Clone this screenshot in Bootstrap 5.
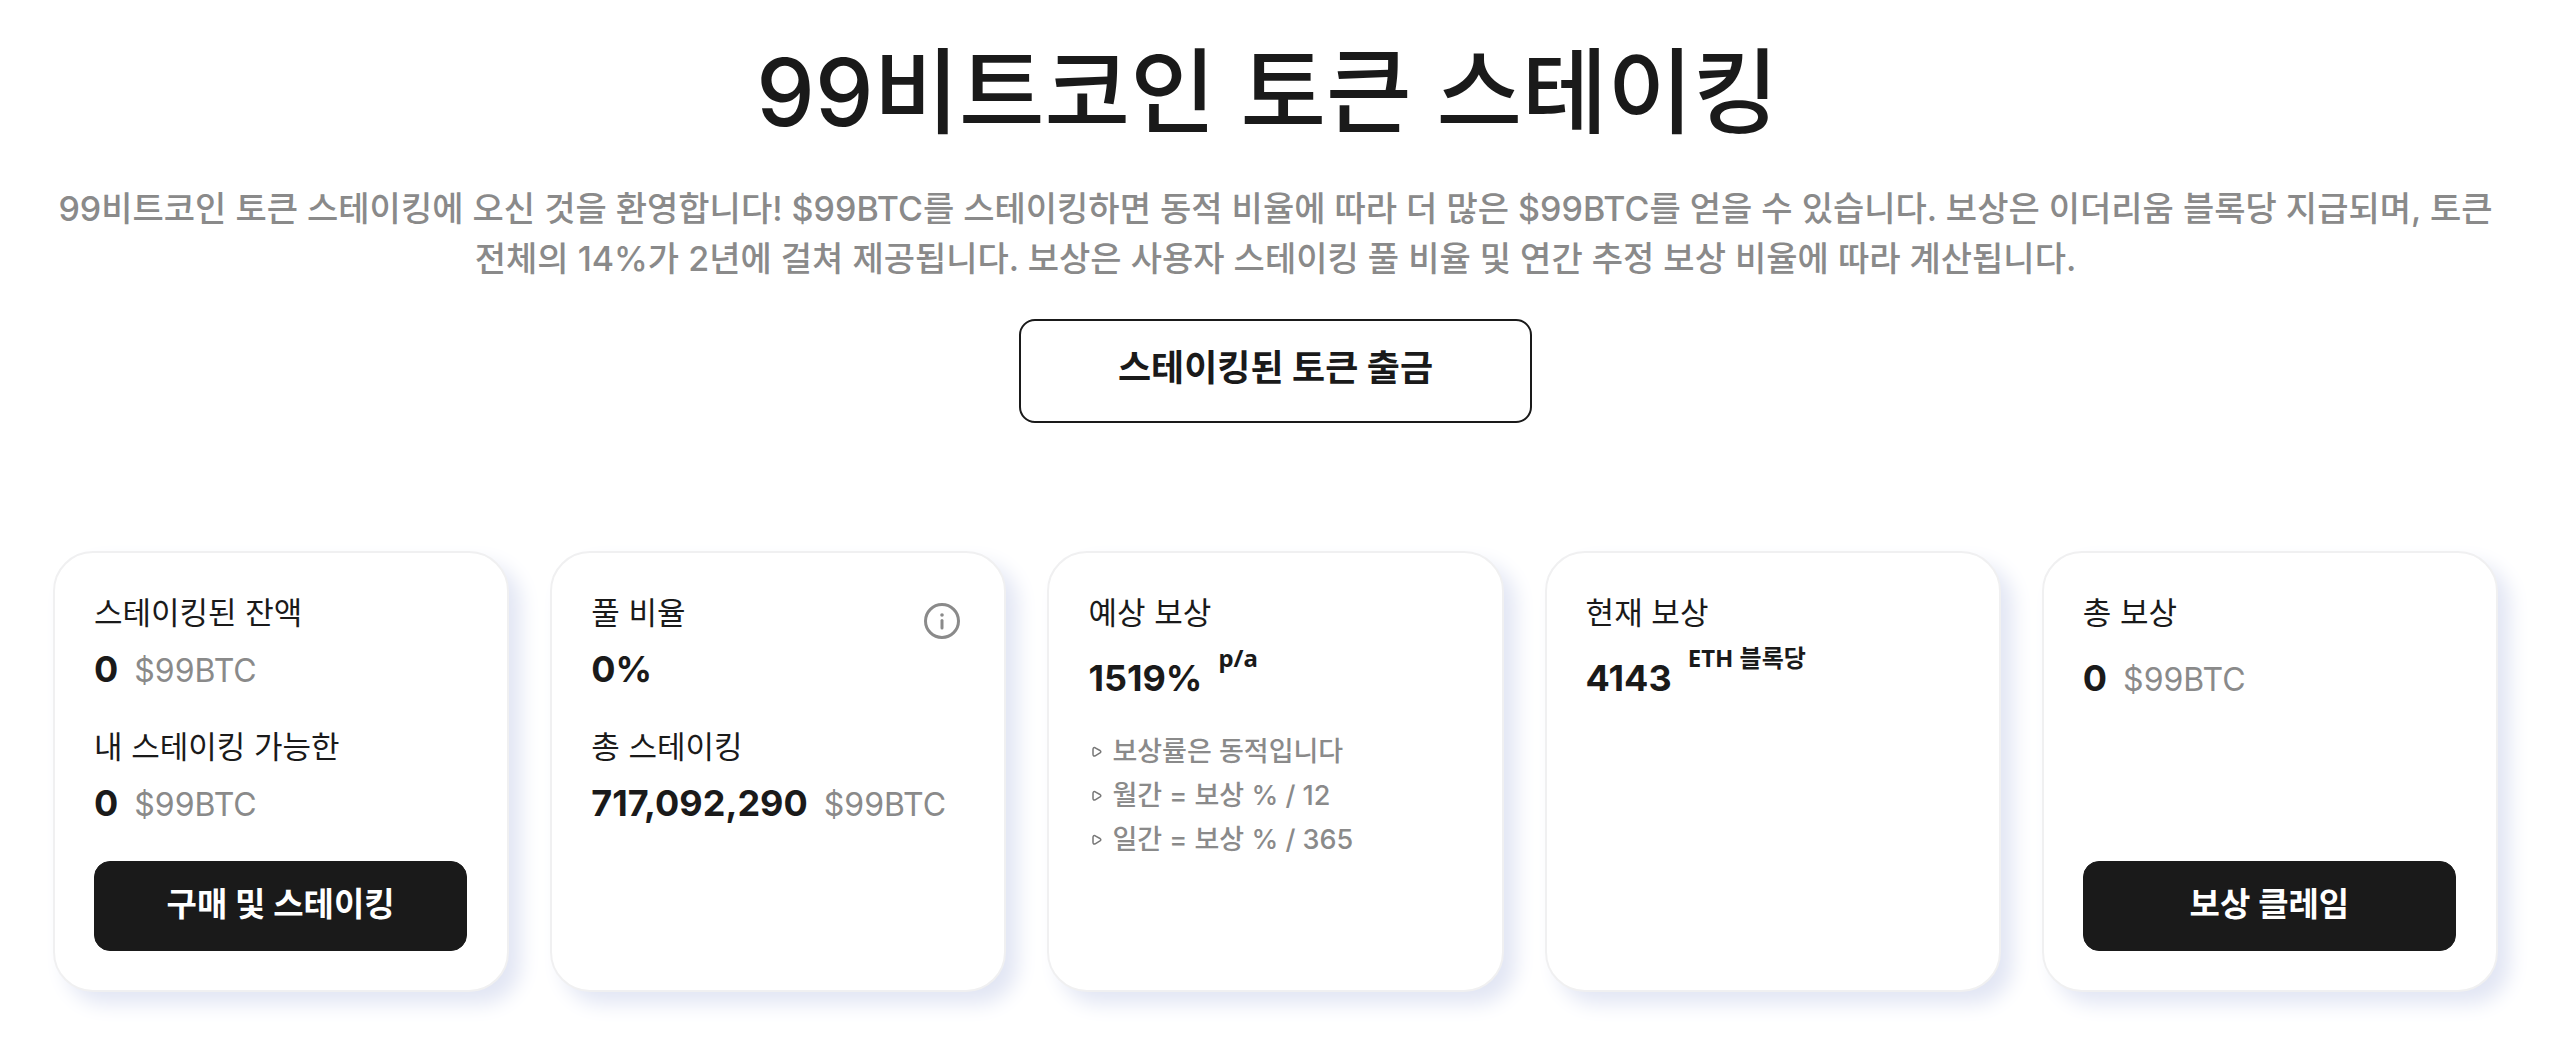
<!DOCTYPE html>
<html lang="ko">
<head>
<meta charset="utf-8">
<meta name="viewport" content="width=device-width, initial-scale=1">
<title>99비트코인 토큰 스테이킹</title>
<link href="https://cdn.jsdelivr.net/npm/bootstrap@5.3.0/dist/css/bootstrap.min.css" rel="stylesheet">
<style>
  :root { --ink: #1a1a1a; --muted: #8a8a8a; }
  body { font-family: Inter, "Noto Sans CJK KR", sans-serif; color: var(--ink); background: #fff; }
  .staking-page { padding: 32px 62px 53px 53px; }
  .hero-title { font-size: 93px; line-height: 120px; font-weight: 500; margin-bottom: 32px; padding-right: 16px; }
  .hero-text { font-size: 34px; line-height: 50px; font-weight: 500; color: var(--muted); margin-bottom: 35px; word-break: keep-all; }
  .btn-withdraw { --bs-btn-color: var(--ink); --bs-btn-border-color: var(--ink); --bs-btn-hover-bg: var(--ink); --bs-btn-hover-color: #fff;
    border-width: 2px; border-radius: 16px; font-size: 36px; line-height: 50px; font-weight: 700; padding: 22px 97px 28px; }
  .stat-grid { gap: 41px; margin-top: 128px; }
  .stat-card { flex: 1 1 0; min-width: 380px; border: 2px solid #f0f0f1; border-radius: 40px; padding: 38px 40px 39px 39px; background: #fff;
    box-shadow: 12px 12px 20px #e2e6f4; }
  .stat-label { font-size: 31px; line-height: 44px; font-weight: 400; margin-bottom: 12px; }
  .stat-group + .stat-group { margin-top: 34px; }
  .stat-value { font-size: 36px; line-height: 44px; gap: 16px; }
  .stat-raised { margin-top: 21px; }
  .stat-unit { font-size: 32px; line-height: 1; color: var(--muted); }
  .stat-note { font: 700 24px/44px "Noto Sans", "Noto Sans CJK KR", sans-serif; align-self: flex-start; margin-top: -20px; }
  .stat-list { font-size: 27px; line-height: 44px; font-weight: 500; color: var(--muted); margin-top: 30px; }
  .stat-list li { gap: 10px; padding-left: 4px; }
  .btn-solid { --bs-btn-color: #fff; --bs-btn-bg: var(--ink); --bs-btn-border-color: var(--ink); --bs-btn-hover-bg: #333; --bs-btn-hover-color: #fff;
    border-radius: 16px; font-size: 33px; line-height: 48px; font-weight: 700; padding: 18px 16px 22px; }
  .btn-gap { padding-top: 36px; }
</style>
<script src="https://cdn.jsdelivr.net/npm/bootstrap@5.3.0/dist/js/bootstrap.bundle.min.js"></script>
</head>
<body>
<main class="staking-page container-fluid">
  <header class="text-center">
    <h1 class="hero-title">99비트코인 토큰 스테이킹</h1>
    <p class="hero-text">99비트코인 토큰 스테이킹에 오신 것을 환영합니다! $99BTC를 스테이킹하면 동적 비율에 따라 더 많은 $99BTC를 얻을 수 있습니다. 보상은 이더리움 블록당 지급되며, 토큰 전체의 14%가 2년에 걸쳐 제공됩니다. 보상은 사용자 스테이킹 풀 비율 및 연간 추정 보상 비율에 따라 계산됩니다.</p>
    <button type="button" class="btn btn-withdraw">스테이킹된 토큰 출금</button>
  </header>

  <section class="stat-grid d-flex flex-wrap align-items-stretch">
    <article class="stat-card d-flex flex-column">
      <div class="stat-group">
        <h2 class="stat-label">스테이킹된 잔액</h2>
        <div class="stat-value d-flex align-items-baseline"><strong>0</strong><span class="stat-unit">$99BTC</span></div>
      </div>
      <div class="stat-group">
        <h2 class="stat-label">내 스테이킹 가능한</h2>
        <div class="stat-value d-flex align-items-baseline"><strong>0</strong><span class="stat-unit">$99BTC</span></div>
      </div>
      <div class="btn-gap mt-auto"><button type="button" class="btn btn-solid w-100">구매 및 스테이킹</button></div>
    </article>

    <article class="stat-card d-flex flex-column">
      <div class="stat-group">
        <div class="d-flex justify-content-between">
          <h2 class="stat-label">풀 비율</h2>
          <button type="button" class="btn px-1 pt-2 pb-0 border-0 lh-1 align-self-start mt-1" aria-label="풀 비율 정보">
            <svg width="36" height="36" viewBox="0 0 36 36" fill="none" stroke="#8a8a8a" stroke-width="3" stroke-linecap="round"><circle cx="18" cy="18" r="16.5"/><path d="M18 17.5v7.5"/><circle cx="18" cy="12" r="1.8" fill="#8a8a8a" stroke="none"/></svg>
          </button>
        </div>
        <div class="stat-value"><strong>0%</strong></div>
      </div>
      <div class="stat-group">
        <h2 class="stat-label">총 스테이킹</h2>
        <div class="stat-value d-flex align-items-baseline"><strong>717,092,290</strong><span class="stat-unit">$99BTC</span></div>
      </div>
    </article>

    <article class="stat-card d-flex flex-column">
      <h2 class="stat-label mb-0">예상 보상</h2>
      <div class="stat-value stat-raised d-flex align-items-baseline"><strong>1519%</strong><span class="stat-note">p/a</span></div>
      <ul class="stat-list list-unstyled mb-0">
        <li class="d-flex align-items-center"><svg width="10" height="12" viewBox="0 0 10 12" fill="none" stroke="#777" stroke-width="1.5" stroke-linejoin="round"><path d="M1 3.5Q1 1 3.2 1.8L8 4.5Q9.6 5.7 8 6.9L3.2 9.8Q1 10.7 1 8.3Z"/></svg><span>보상률은 동적입니다</span></li>
        <li class="d-flex align-items-center"><svg width="10" height="12" viewBox="0 0 10 12" fill="none" stroke="#777" stroke-width="1.5" stroke-linejoin="round"><path d="M1 3.5Q1 1 3.2 1.8L8 4.5Q9.6 5.7 8 6.9L3.2 9.8Q1 10.7 1 8.3Z"/></svg><span>월간 = 보상 % / 12</span></li>
        <li class="d-flex align-items-center"><svg width="10" height="12" viewBox="0 0 10 12" fill="none" stroke="#777" stroke-width="1.5" stroke-linejoin="round"><path d="M1 3.5Q1 1 3.2 1.8L8 4.5Q9.6 5.7 8 6.9L3.2 9.8Q1 10.7 1 8.3Z"/></svg><span>일간 = 보상 % / 365</span></li>
      </ul>
    </article>

    <article class="stat-card d-flex flex-column">
      <h2 class="stat-label mb-0">현재 보상</h2>
      <div class="stat-value stat-raised d-flex align-items-baseline"><strong>4143</strong><span class="stat-note">ETH 블록당</span></div>
    </article>

    <article class="stat-card d-flex flex-column">
      <h2 class="stat-label mb-0">총 보상</h2>
      <div class="stat-value stat-raised d-flex align-items-baseline"><strong>0</strong><span class="stat-unit">$99BTC</span></div>
      <div class="btn-gap mt-auto"><button type="button" class="btn btn-solid w-100">보상 클레임</button></div>
    </article>
  </section>
</main>
</body>
</html>
